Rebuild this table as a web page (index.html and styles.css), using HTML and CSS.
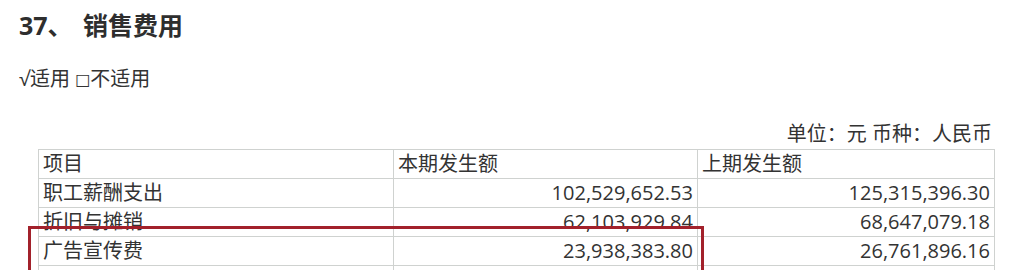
FILE: index.html
```html
<!DOCTYPE html>
<html lang="zh-CN">
<head>
<meta charset="utf-8">
<link rel="stylesheet" href="styles.css">
</head>
<body>
<div class="page">
  <h2 class="title">37、 销售费用</h2>
  <p class="apply">√适用 <span class="box">□</span>不适用</p>
  <div class="unit">单位：元 币种：人民币</div>
  <div class="table-wrap">
    <table class="data">
      <colgroup><col class="c1"><col class="c2"><col class="c3"></colgroup>
      <tr><td>项目</td><td>本期发生额</td><td>上期发生额</td></tr>
      <tr><td>职工薪酬支出</td><td class="num">102,529,652.53</td><td class="num">125,315,396.30</td></tr>
      <tr><td>折旧与摊销</td><td class="num">62,103,929.84</td><td class="num">68,647,079.18</td></tr>
      <tr><td>广告宣传费</td><td class="num">23,938,383.80</td><td class="num">26,761,896.16</td></tr>
      <tr><td>&nbsp;</td><td>&nbsp;</td><td>&nbsp;</td></tr>
    </table>
    <div class="highlight"></div>
  </div>
</div>
</body>
</html>
```

FILE: styles.css
```css
html, body {
  margin: 0;
  padding: 0;
  background: #ffffff;
  overflow: hidden;
}
.page {
  width: 1033px;
  height: 270px;
  overflow: hidden;
  color: #333333;
  font-family: "Open Sans", "Noto Sans CJK SC", sans-serif;
}
.title {
  margin: 9px 0 0 19px;
  font-size: 25px;
  line-height: 32px;
  font-weight: bold;
  color: #2e2e2e;
  word-spacing: 4px;
}
.apply {
  margin: 24px 0 0 19px;
  font-size: 20px;
  line-height: 28px;
}
.box {
  font-family: "DejaVu Sans", sans-serif;
  font-size: 16px;
  vertical-align: 1px;
}
.unit {
  margin-top: 26px;
  width: 992px;
  text-align: right;
  font-size: 20px;
  line-height: 28px;
}
.table-wrap {
  position: relative;
  margin: 1px 0 0 38px;
  width: 956px;
}
.data {
  border-collapse: collapse;
  table-layout: fixed;
  width: 956px;
  font-size: 20px;
}
.c1 { width: 355px; }
.c2 { width: 304px; }
.c3 { width: 297px; }
.data td {
  border: 1px solid #cfd2d0;
  height: 27.5px;
  padding: 0 4px;
  line-height: 27px;
  white-space: nowrap;
  overflow: hidden;
}
.data tr:nth-child(2n) td {
  height: 28.5px;
}
.data td.num {
  text-align: right;
}
.highlight {
  position: absolute;
  left: -10px;
  top: 77px;
  width: 670px;
  height: 60px;
  border: 3px solid #a2212b;
}
```
